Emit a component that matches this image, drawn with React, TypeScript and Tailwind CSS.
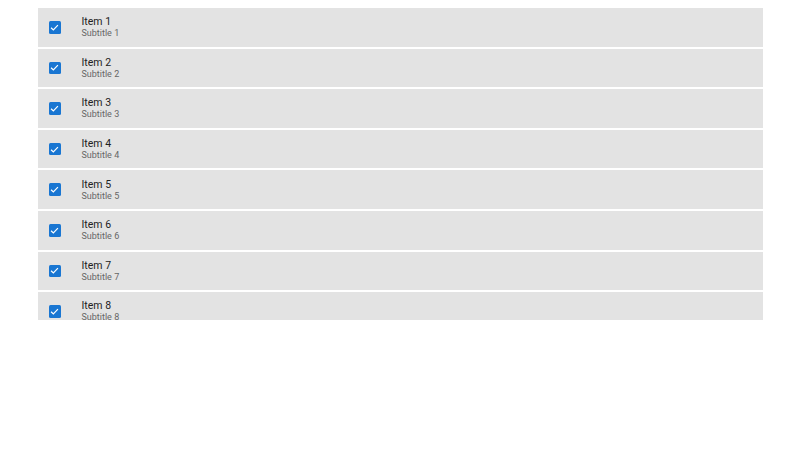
import React from "react";

const items = [1, 2, 3, 4, 5, 6, 7, 8];

export default function App() {
  return (
    <div className="w-[800px] h-[450px] bg-white" style={{ fontFamily: "Roboto, sans-serif" }}>
      <div className="mx-[37.5px] pt-[8px]">
        <div className="h-[312px] overflow-hidden flex flex-col gap-[2px]">
          {items.map((n) => (
            <div key={n} className="h-[38.6px] shrink-0 bg-[#e3e3e3] flex items-center pl-[11px]">
              <div className="w-[12.5px] h-[12.5px] shrink-0 rounded-[1.5px] bg-[#1976d2] flex items-center justify-center">
                <svg width="11" height="11" viewBox="0 0 24 24">
                  <path d="M4.5 12.5l5 5L19.5 7" fill="none" stroke="white" strokeWidth="2.6" />
                </svg>
              </div>
              <div className="ml-[20.5px] flex flex-col">
                <span className="text-[10.5px] leading-[13px] text-[#222]">Item {n}</span>
                <span className="text-[9px] leading-[11px] text-[#666]">Subtitle {n}</span>
              </div>
            </div>
          ))}
        </div>
      </div>
    </div>
  );
}
